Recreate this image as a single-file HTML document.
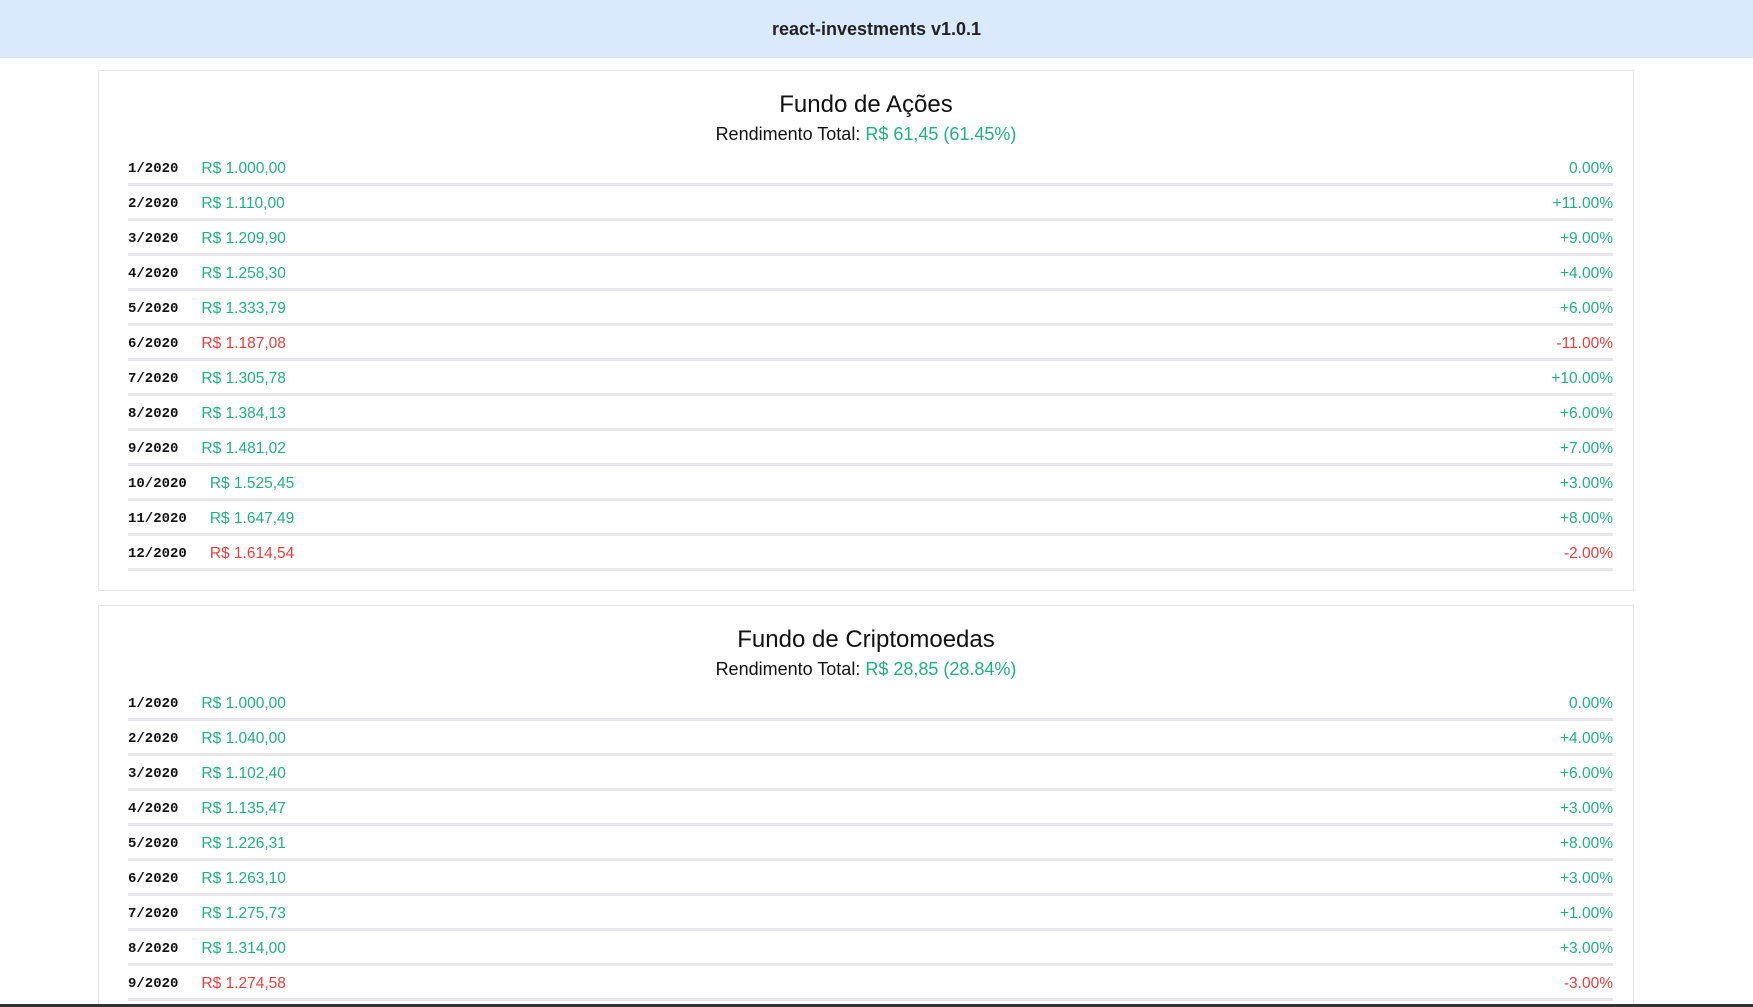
<!DOCTYPE html>
<html><head><meta charset="utf-8"><style>
*{box-sizing:border-box;margin:0;padding:0}
html,body{width:1753px;height:1007px;overflow:hidden;background:#fff;font-family:"Liberation Sans","DejaVu Sans",sans-serif}
.hdr{height:58px;background:#dbe9fd;text-align:center;font-size:18px;font-weight:bold;line-height:58px;color:#222}
.card{position:absolute;left:98px;width:1536px;border:1px solid #e6e6e6;background:#fff;overflow:hidden}
.c1{top:70px;height:521px}
.c2{top:605px;height:399px;border-bottom:none}
h2{text-align:center;font-size:24px;font-weight:normal;line-height:30px;color:#111;margin-top:19px}
.rt{text-align:center;font-size:18px;line-height:24px;margin-top:2px;color:#111}
.g{color:#1fb07f}.r{color:#ef3b3b}
.rows{margin:5px 20px 0 29px}
.row{height:35px;border-bottom:3px solid #e6e6ec;display:flex;align-items:center;font-size:15.5px;padding-top:3px}
.d{font-family:"Liberation Mono",monospace;font-weight:bold;font-size:14px;margin-right:23px;color:#111}
.v{flex:1}
.p{text-align:right}
.bar{position:absolute;left:0;top:1004px;width:1753px;height:3px;background:#333}
</style></head><body>
<div class="hdr">react-investments v1.0.1</div>
<div class="card c1">
<h2>Fundo de Ações</h2>
<div class="rt">Rendimento Total: <span class="g">R$ 61,45 (61.45%)</span></div>
<div class="rows">
<div class="row"><span class="d">1/2020</span><span class="v g">R$ 1.000,00</span><span class="p g">0.00%</span></div>
<div class="row"><span class="d">2/2020</span><span class="v g">R$ 1.110,00</span><span class="p g">+11.00%</span></div>
<div class="row"><span class="d">3/2020</span><span class="v g">R$ 1.209,90</span><span class="p g">+9.00%</span></div>
<div class="row"><span class="d">4/2020</span><span class="v g">R$ 1.258,30</span><span class="p g">+4.00%</span></div>
<div class="row"><span class="d">5/2020</span><span class="v g">R$ 1.333,79</span><span class="p g">+6.00%</span></div>
<div class="row"><span class="d">6/2020</span><span class="v r">R$ 1.187,08</span><span class="p r">-11.00%</span></div>
<div class="row"><span class="d">7/2020</span><span class="v g">R$ 1.305,78</span><span class="p g">+10.00%</span></div>
<div class="row"><span class="d">8/2020</span><span class="v g">R$ 1.384,13</span><span class="p g">+6.00%</span></div>
<div class="row"><span class="d">9/2020</span><span class="v g">R$ 1.481,02</span><span class="p g">+7.00%</span></div>
<div class="row"><span class="d">10/2020</span><span class="v g">R$ 1.525,45</span><span class="p g">+3.00%</span></div>
<div class="row"><span class="d">11/2020</span><span class="v g">R$ 1.647,49</span><span class="p g">+8.00%</span></div>
<div class="row"><span class="d">12/2020</span><span class="v r">R$ 1.614,54</span><span class="p r">-2.00%</span></div>
</div></div>
<div class="card c2">
<h2>Fundo de Criptomoedas</h2>
<div class="rt">Rendimento Total: <span class="g">R$ 28,85 (28.84%)</span></div>
<div class="rows">
<div class="row"><span class="d">1/2020</span><span class="v g">R$ 1.000,00</span><span class="p g">0.00%</span></div>
<div class="row"><span class="d">2/2020</span><span class="v g">R$ 1.040,00</span><span class="p g">+4.00%</span></div>
<div class="row"><span class="d">3/2020</span><span class="v g">R$ 1.102,40</span><span class="p g">+6.00%</span></div>
<div class="row"><span class="d">4/2020</span><span class="v g">R$ 1.135,47</span><span class="p g">+3.00%</span></div>
<div class="row"><span class="d">5/2020</span><span class="v g">R$ 1.226,31</span><span class="p g">+8.00%</span></div>
<div class="row"><span class="d">6/2020</span><span class="v g">R$ 1.263,10</span><span class="p g">+3.00%</span></div>
<div class="row"><span class="d">7/2020</span><span class="v g">R$ 1.275,73</span><span class="p g">+1.00%</span></div>
<div class="row"><span class="d">8/2020</span><span class="v g">R$ 1.314,00</span><span class="p g">+3.00%</span></div>
<div class="row"><span class="d">9/2020</span><span class="v r">R$ 1.274,58</span><span class="p r">-3.00%</span></div>
</div></div>
<div class="bar"></div>
</body></html>
